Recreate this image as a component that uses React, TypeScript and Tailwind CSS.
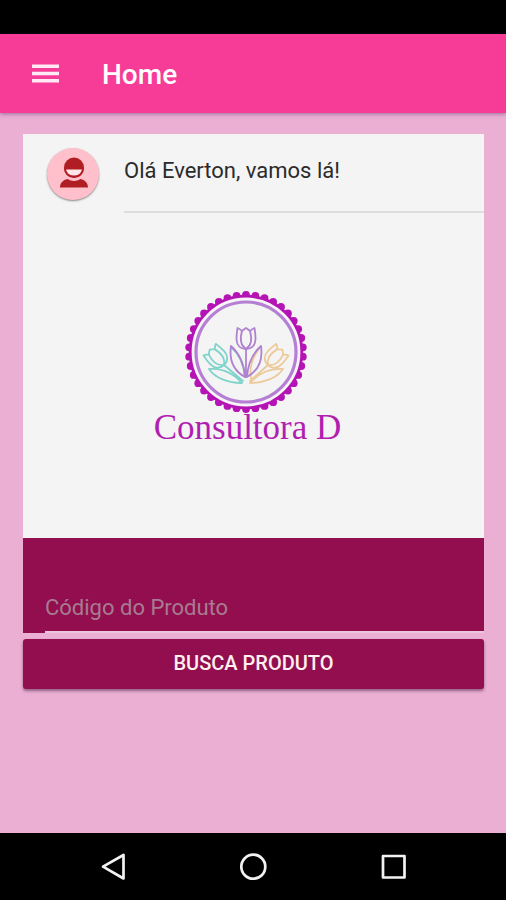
import React from 'react';

const TOOTH_COUNT = 38;

const AvatarIcon: React.FC = () => (
  <svg viewBox="0 0 52 52" className="w-13 h-13" aria-hidden="true">
    <circle cx="27" cy="19.500" r="10" fill="#b01e23" />
    <path d="M18.500 21.500h17c-.5 8-16.500 8-17 0z" fill="#ffe6ea" />
    <path d="M17.900 20a9.100 9.100 0 0 0 18.200 0" fill="none" stroke="#b01e23" strokeWidth="2" />
    <path d="M13 39.500c0-4.500 3-7.500 7.500-8.500 4 2.600 9 2.600 13 0 4.500 1 7.500 4 7.500 8.500z" fill="#b01e23" />
  </svg>
);

// drawn upwards from its base at 0,0
const TulipHead: React.FC = () => (
  <>
    <path d="M0 0c-6 0-9.500-4-9.500-10 0-4 .5-8 1-11 2 .5 3 2 4.500 3 1-1 2.500-2 4-3 1.500 1 3 2 4 3 1.500-1 2.500-2.500 4.500-3 .5 3 1 7 1 11 0 6-3.500 10-9.500 10z" />
    <path d="M-4-18c-2 7-2 14 4 18 6-4 6-11 4-18" />
  </>
);

const Logo: React.FC = () => {
  const teeth = Array.from({ length: TOOTH_COUNT }, (_, i) => {
    const angle = (i * 2 * Math.PI) / TOOTH_COUNT;
    return { x: 62 + 57 * Math.sin(angle), y: 62 - 57 * Math.cos(angle) };
  });

  return (
    <svg viewBox="0 0 124 124" className="w-31 h-31" aria-hidden="true">
      {teeth.map((tooth, i) => (
        <circle key={i} cx={tooth.x} cy={tooth.y} r="3.900" fill="#b514b5" />
      ))}
      <circle cx="62" cy="62" r="55.800" fill="#f7f4f8" stroke="#b514b5" strokeWidth="2.800" />
      <circle cx="62" cy="62" r="50" fill="#f4f4f4" stroke="#b57fd3" strokeWidth="3.200" />
      <g fill="none" strokeWidth="1.800" strokeLinejoin="round" strokeLinecap="round">
        <g stroke="#7fd3cb">
          <g transform="translate(40 75) rotate(-43)">
            <TulipHead />
          </g>
          <path d="M40 75l19 16M58 93c-9-10-21-15-33-14 6 9 19 14 33 14M47 57c8 7 13 17 14 30" />
        </g>
        <g stroke="#ecca9b">
          <g transform="translate(84 75) rotate(43)">
            <TulipHead />
          </g>
          <path d="M84 75L66 91M66 93c9-10 21-15 33-14-6 9-19 14-33 14M67 88c-2-11 2-21 8-29" />
        </g>
        <g stroke="#b083d0">
          <g transform="translate(62 59)">
            <TulipHead />
          </g>
          <path d="M62 59v28M61 87c-11-6-16-17-14-31 8 7 13 18 14 31M63 87c11-6 16-17 14-31-8 7-13 18-14 31" />
        </g>
      </g>
    </svg>
  );
};

const NavigationBar: React.FC = () => (
  <nav className="flex h-[67px] items-center justify-around bg-black px-[43px]">
    <button type="button" aria-label="Voltar">
      <svg viewBox="0 0 28 28" className="w-7 h-7" fill="none" stroke="#f2f2f2" strokeWidth="2.700" strokeLinejoin="round">
        <path d="M24.500 2v23.500L4 13.700z" />
      </svg>
    </button>
    <button type="button" aria-label="Início">
      <svg viewBox="0 0 28 28" className="w-7 h-7" fill="none" stroke="#f2f2f2" strokeWidth="2.700">
        <circle cx="14.300" cy="13.700" r="12" />
      </svg>
    </button>
    <button type="button" aria-label="Recentes">
      <svg viewBox="0 0 28 28" className="w-7 h-7" fill="none" stroke="#f2f2f2" strokeWidth="2.700" strokeLinejoin="round">
        <path d="M4 3h21.500v21.500H4z" />
      </svg>
    </button>
  </nav>
);

const App: React.FC = () => {
  return (
    <div className="flex min-h-screen flex-col bg-[#ecafd4] font-[Roboto,sans-serif]">
      <div className="h-[34px] bg-black" />
      <header className="flex h-[79px] items-center bg-[#f63c97] pl-8 text-white shadow-[0_1px_4px_rgba(70,40,100,0.5)]">
        <button type="button" aria-label="Abrir menu" className="mr-[42px]">
          <svg viewBox="0 0 28 20" className="w-7 h-5" fill="#ffe9f4" aria-hidden="true">
            <path d="M0 .6h27V4H0zM0 7.800h27v3.400H0zM0 15h27v3.400H0z" />
          </svg>
        </button>
        <h1 className="pt-[2px] text-[28px] font-medium">Home</h1>
      </header>

      <main className="flex-1 pt-[21px] pr-[22px] pl-[23px]">
        <section className="bg-[#f4f4f4]">
          <div className="flex h-[79px] pl-6">
            <div className="mt-[14px] mr-[25px] h-13 w-13 shrink-0 rounded-full bg-[#ffc0cb] shadow-[0_1px_2px_rgba(0,0,0,0.45)]">
              <AvatarIcon />
            </div>
            <p className="flex-1 border-b-2 border-[#dedede] pt-[21px] text-[22px] leading-8 text-[#2b2b2b]">
              Olá Everton, vamos lá!
            </p>
          </div>
          <div className="flex h-[325px] flex-col items-center pt-[77px]">
            <div className="mr-4">
              <Logo />
            </div>
            <h2 className="-mt-[6px] mr-3 font-['Liberation_Serif',serif] text-[35px] leading-10 text-[#b01fb0]">
              Consultora D
            </h2>
          </div>
        </section>

        <form onSubmit={(e) => e.preventDefault()}>
          <div className="bg-[#920e4f] pt-[46px] pl-[22px]">
            <input
              type="text"
              aria-label="Código do Produto"
              placeholder="Código do Produto"
              className="block h-[49px] w-full border-b-2 border-[#edc6d9] bg-transparent text-[22px] text-white outline-none placeholder:text-[#a77c91]"
            />
          </div>
          <button
            type="submit"
            className="mt-[6px] h-[50px] w-full rounded-[3px] bg-[#920e4f] pb-[2px] text-xl font-medium text-[#fff0f0] shadow-[0_2px_3px_rgba(60,20,60,0.5)]"
          >
            BUSCA PRODUTO
          </button>
        </form>
      </main>

      <NavigationBar />
    </div>
  );
};

export default App;
